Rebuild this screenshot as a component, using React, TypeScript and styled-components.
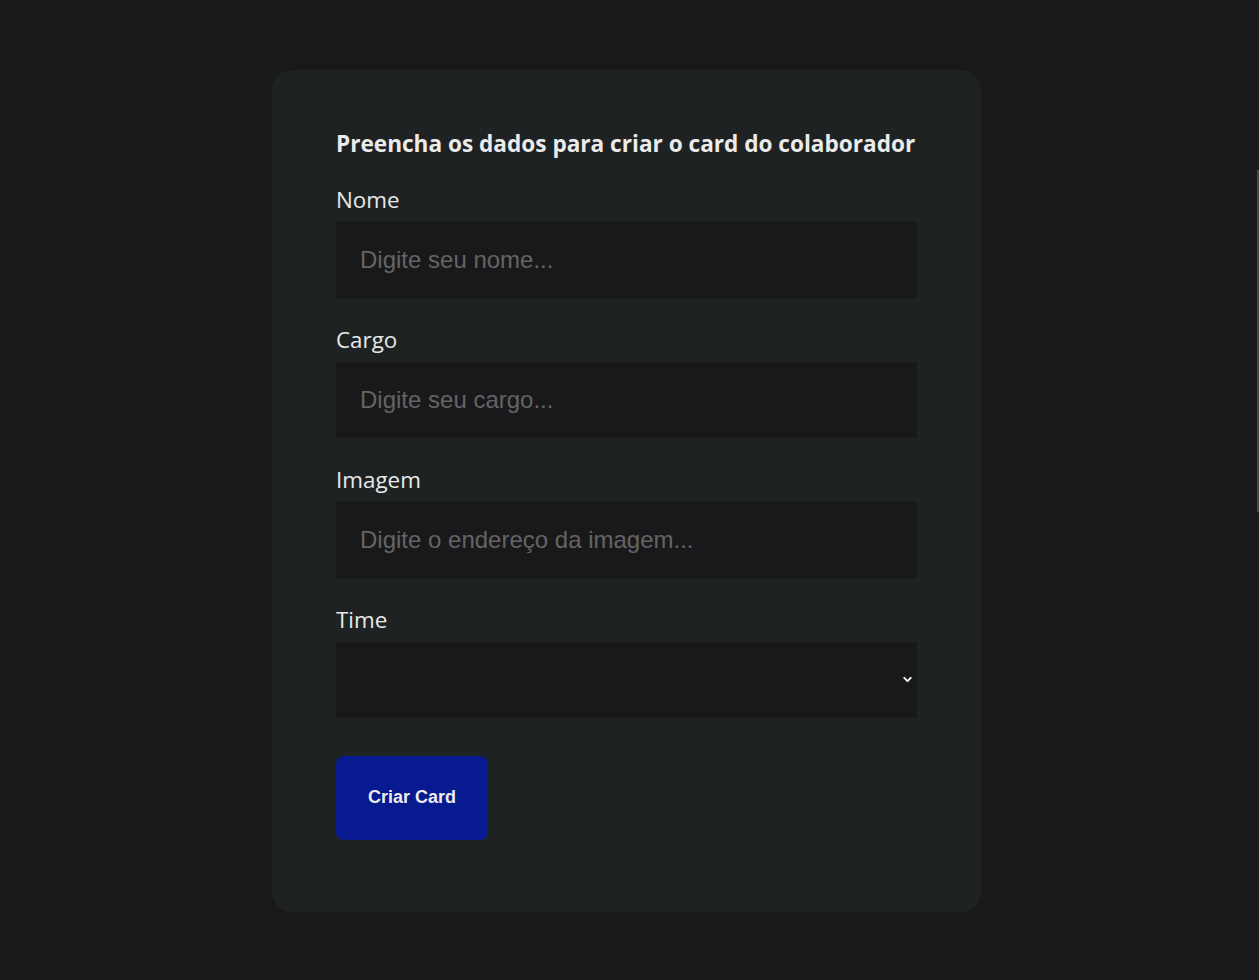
import React from "react";
import styled, { createGlobalStyle } from "styled-components";
import { ChevronDown } from "lucide-react";

const fields = [
  { label: "Nome", placeholder: "Digite seu nome..." },
  { label: "Cargo", placeholder: "Digite seu cargo..." },
  { label: "Imagem", placeholder: "Digite o endereço da imagem..." },
];

function App() {
  return (
    <React.Fragment>
      <GlobalStyle />
      <Page>
        <FormCard onSubmit={(e) => e.preventDefault()}>
          <Title>Preencha os dados para criar o card do colaborador</Title>
          {fields.map((f) => (
            <Field key={f.label}>
              <Label>{f.label}</Label>
              <TextInput type="text" placeholder={f.placeholder} />
            </Field>
          ))}
          <Field>
            <Label>Time</Label>
            <SelectWrap>
              <Select defaultValue="">
                <option value=""></option>
              </Select>
              <div className="arrow">
                <ChevronDown size={13} strokeWidth={3.5} />
              </div>
            </SelectWrap>
          </Field>
          <Button type="submit">Criar Card</Button>
        </FormCard>
      </Page>
      <EdgeBar />
    </React.Fragment>
  );
}

const GlobalStyle = createGlobalStyle`
  html, body {
    margin: 0;
    padding: 0;
    background: #19191b;
  }
  body {
    font-family: "Open Sans", "Noto Sans", sans-serif;
    color: #e8e8e8;
  }
  * {
    box-sizing: border-box;
  }
`;

const Page = styled.div`
  display: flex;
  justify-content: center;
  padding: 70px 6px 68px 0;
  min-height: 980px;
`;

const FormCard = styled.form`
  width: 709px;
  background: #1f2223;
  border-radius: 20px;
  padding: 58px 64px 72px 64px;
  display: flex;
  flex-direction: column;
`;

const Title = styled.h2`
  margin: 0 0 25px;
  font-size: 22.6px;
  line-height: 31px;
  font-weight: 700;
  color: #ebebeb;
  white-space: nowrap;
`;

const Field = styled.div`
  display: flex;
  flex-direction: column;
  gap: 7px;
  margin-bottom: 26px;
`;

const Label = styled.label`
  font-size: 22.4px;
  line-height: 31px;
  color: #e8e8e8;
`;

const TextInput = styled.input`
  height: 76px;
  width: 100%;
  border: none;
  outline: none;
  background: #19191b;
  padding: 0 24px;
  font-family: "Liberation Sans", Arial, sans-serif;
  font-size: 24px;
  color: #e8e8e8;
  &::placeholder {
    color: #646464;
  }
`;

const SelectWrap = styled.div`
  position: relative;
  .arrow {
    position: absolute;
    right: 3px;
    top: 31px;
    display: flex;
    color: #ffffff;
    pointer-events: none;
  }
`;

const Select = styled.select`
  appearance: none;
  width: 100%;
  height: 76px;
  border: none;
  outline: none;
  background: #19191b;
  color: #e8e8e8;
  padding: 0 24px;
  font-size: 22px;
`;

const Button = styled.button`
  align-self: flex-start;
  margin-top: 12px;
  width: 152px;
  height: 84px;
  border: none;
  border-radius: 8px;
  background: #071a8f;
  color: #ececec;
  font-family: "Liberation Sans", Arial, sans-serif;
  font-size: 18px;
  font-weight: 700;
  line-height: 1;
  padding: 0 0 2px;
  cursor: pointer;
`;

const EdgeBar = styled.div`
  position: fixed;
  right: 0;
  top: 170px;
  width: 2px;
  height: 342px;
  background: #45494c;
`;

export default App;
